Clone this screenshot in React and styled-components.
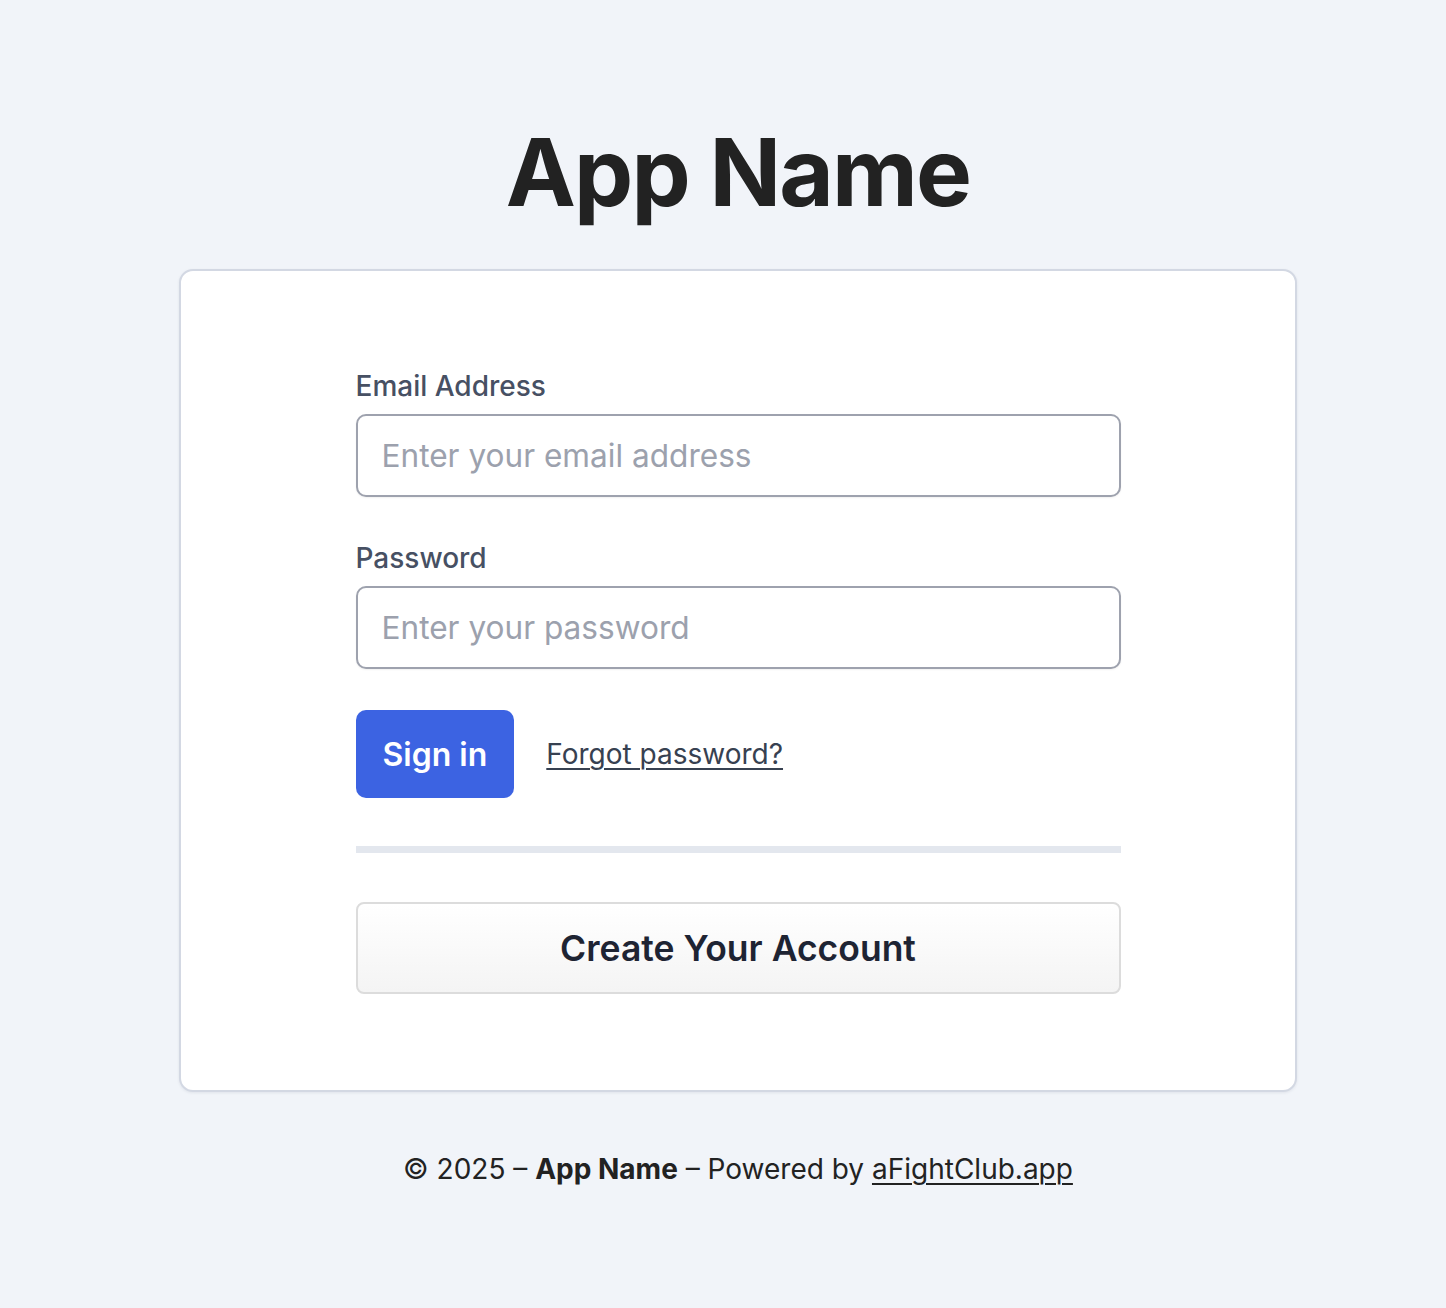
import styled, { createGlobalStyle } from 'styled-components';

const GlobalStyle = createGlobalStyle`
  body {
    margin: 0;
    background: #f1f4f9;
    font-family: Inter, "Noto Sans", sans-serif;
    color: #222;
  }
`;

const Page = styled.div`
  min-height: 1308px;
  padding: 114px 0 0 30px;
  box-sizing: border-box;
  display: flex;
  flex-direction: column;
  align-items: center;
`;

const Title = styled.h1`
  margin: 0 0 39px;
  font-size: 94px;
  line-height: 116px;
  font-weight: 700;
  letter-spacing: -1.8px;
  color: #222;
`;

const Card = styled.div`
  width: 1118px;
  box-sizing: border-box;
  background: #fff;
  border: 2px solid #d3d8e3;
  border-radius: 14px;
  box-shadow: 0 1px 3px rgba(30, 40, 70, 0.08);
  padding: 98px 0 96px;
  display: flex;
  justify-content: center;
`;

const Form = styled.form`
  width: 765px;
  display: flex;
  flex-direction: column;
`;

const Field = styled.div`
  display: flex;
  flex-direction: column;
  gap: 11px;
  margin-bottom: ${(p) => p.$mb || 0}px;
`;

const Label = styled.label`
  font-size: 28px;
  line-height: 34px;
  font-weight: 500;
  color: #475063;
`;

const Input = styled.input`
  height: 83px;
  box-sizing: border-box;
  border: 2px solid #9ea2ae;
  border-radius: 10px;
  padding: 0 24px;
  font-family: inherit;
  font-size: 31.6px;
  color: #222;
  background: #fff;
  box-shadow: 0 1px 2px rgba(0, 0, 0, 0.06);
  outline: none;

  &::placeholder {
    color: #9ca1ad;
  }
`;

const Actions = styled.div`
  display: flex;
  align-items: center;
  gap: 32px;
  margin-top: 41px;
`;

const PrimaryButton = styled.button`
  height: 88px;
  padding: 0 27px;
  border: none;
  border-radius: 10px;
  background: #3c63e2;
  color: #fff;
  font-family: inherit;
  font-size: 32px;
  font-weight: 600;
  cursor: pointer;
`;

const TextLink = styled.a`
  font-size: 28px;
  color: #374151;
  text-decoration: underline;
  text-underline-offset: 4px;
  text-decoration-thickness: 2px;
  cursor: pointer;
`;

const Divider = styled.hr`
  border: none;
  height: 7px;
  background: #e3e7ee;
  margin: 48px 0 49px;
`;

const SecondaryButton = styled.button`
  height: 92px;
  border: 2px solid #dcdcdc;
  border-radius: 8px;
  background: linear-gradient(#ffffff, #f4f4f4);
  color: #1e2433;
  font-family: inherit;
  font-size: 35.5px;
  font-weight: 600;
  cursor: pointer;
`;

const Footer = styled.footer`
  margin-top: 60px;
  font-size: 28px;
  line-height: 34px;
  color: #222;

  strong {
    font-weight: 700;
  }

  a {
    color: #222;
    text-decoration: underline;
    text-underline-offset: 4px;
    text-decoration-thickness: 2px;
  }
`;

export default function App() {
  return (
    <>
      <GlobalStyle />
      <Page>
        <Title>App Name</Title>
        <Card>
          <Form onSubmit={(e) => e.preventDefault()}>
            <Field $mb={44}>
              <Label htmlFor="email">Email Address</Label>
              <Input id="email" type="email" placeholder="Enter your email address" />
            </Field>
            <Field>
              <Label htmlFor="password">Password</Label>
              <Input id="password" type="password" placeholder="Enter your password" />
            </Field>
            <Actions>
              <PrimaryButton type="submit">Sign in</PrimaryButton>
              <TextLink>Forgot password?</TextLink>
            </Actions>
            <Divider />
            <SecondaryButton type="button">Create Your Account</SecondaryButton>
          </Form>
        </Card>
        <Footer>
          © 2025 – <strong>App Name</strong> – Powered by <a>aFightClub.app</a>
        </Footer>
      </Page>
    </>
  );
}
